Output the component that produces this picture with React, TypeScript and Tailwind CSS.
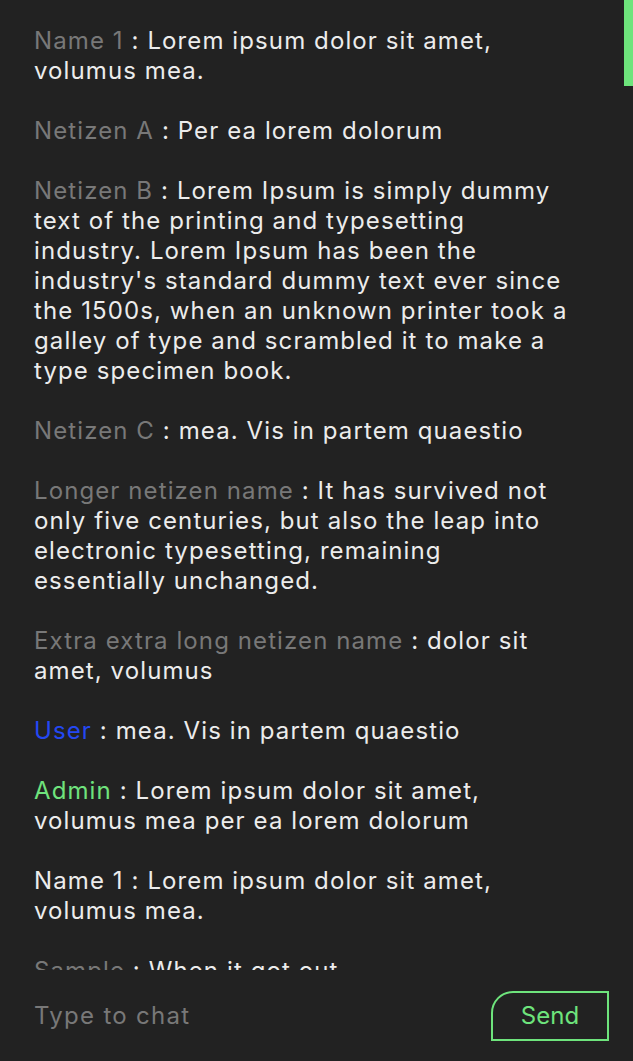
import React from 'react';

type Message = { name: string; text: string; tone: 'muted' | 'user' | 'admin' | 'plain' };

const messages: Message[] = [
  { name: 'Name 1', text: 'Lorem ipsum dolor sit amet, volumus mea.', tone: 'muted' },
  { name: 'Netizen A', text: 'Per ea lorem dolorum', tone: 'muted' },
  {
    name: 'Netizen B',
    text: "Lorem Ipsum is simply dummy text of the printing and typesetting industry. Lorem Ipsum has been the industry's standard dummy text ever since the 1500s, when an unknown printer took a galley of type and scrambled it to make a type specimen book.",
    tone: 'muted',
  },
  { name: 'Netizen C', text: 'mea. Vis in partem quaestio', tone: 'muted' },
  {
    name: 'Longer netizen name',
    text: 'It has survived not only five centuries, but also the leap into electronic typesetting, remaining essentially unchanged.',
    tone: 'muted',
  },
  { name: 'Extra extra long netizen name', text: 'dolor sit amet, volumus', tone: 'muted' },
  { name: 'User', text: 'mea. Vis in partem quaestio', tone: 'user' },
  { name: 'Admin', text: 'Lorem ipsum dolor sit amet, volumus mea per ea lorem dolorum', tone: 'admin' },
  { name: 'Name 1', text: 'Lorem ipsum dolor sit amet, volumus mea.', tone: 'plain' },
  { name: 'Sample', text: 'When it got out', tone: 'muted' },
];

const nameColor = {
  muted: 'text-[#787878]',
  user: 'text-[#2448f2]',
  admin: 'text-[#6fe37d]',
  plain: 'text-[#ececec]',
};

export default function App() {
  return (
    <div className="h-[1061px] flex flex-col bg-[#222222] font-['Inter','Noto_Sans',sans-serif] text-[#ececec]">
      <div className="relative flex-1 overflow-hidden">
        <div className="flex flex-col gap-[30px] pl-[34px] pr-[60px] pt-[26px] text-[24px] leading-[30px] tracking-[1.1px]">
          {messages.map((m, i) => (
            <p key={i}>
              <span className={nameColor[m.tone]}>{m.name}</span> : {m.text}
            </p>
          ))}
        </div>
        <div className="absolute right-0 top-0 w-[9px] h-[86px] bg-[#6ee47c]" />
      </div>

      <div className="h-[91px] flex items-center justify-between pl-[34px] pr-[24px]">
        <input
          placeholder="Type to chat"
          className="flex-1 bg-transparent text-[24px] tracking-[1.3px] text-[#ececec] placeholder:text-[#787878] outline-none"
        />
        <button className="w-[118px] h-[50px] border-2 border-[#6ee47c] rounded-tl-[22px] text-[#6ee47c] text-[24px]">
          Send
        </button>
      </div>
    </div>
  );
}
